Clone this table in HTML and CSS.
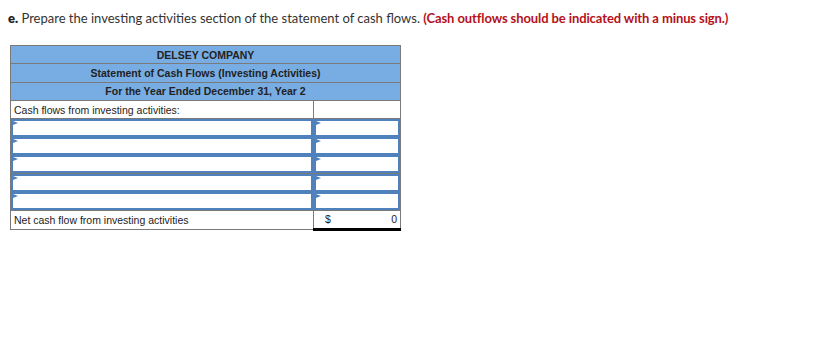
FILE: index.html
```html
<!DOCTYPE html>
<html>
<head>
<meta charset="utf-8">
<link rel="stylesheet" href="styles.css">
</head>
<body>
<p class="prompt"><b class="part">e.</b> Prepare the investing activities section of the statement of cash flows. <b class="note">(Cash outflows should be indicated with a minus sign.)</b></p>
<table class="sheet">
  <colgroup><col class="c1"><col class="c2"></colgroup>
  <tr class="head"><td colspan="2">DELSEY COMPANY</td></tr>
  <tr class="head"><td colspan="2">Statement of Cash Flows (Investing Activities)</td></tr>
  <tr class="head"><td colspan="2">For the Year Ended December 31, Year 2</td></tr>
  <tr class="plain"><td class="label">Cash flows from investing activities:</td><td class="amt"></td></tr>
  <tr class="entry"><td class="label"><div class="box"><span class="flag"></span></div></td><td class="amt"><div class="box"><span class="flag"></span></div></td></tr>
  <tr class="entry"><td class="label"><div class="box"><span class="flag"></span></div></td><td class="amt"><div class="box"><span class="flag"></span></div></td></tr>
  <tr class="entry"><td class="label"><div class="box"><span class="flag"></span></div></td><td class="amt"><div class="box"><span class="flag"></span></div></td></tr>
  <tr class="entry"><td class="label"><div class="box"><span class="flag"></span></div></td><td class="amt"><div class="box"><span class="flag"></span></div></td></tr>
  <tr class="entry"><td class="label"><div class="box"><span class="flag"></span></div></td><td class="amt"><div class="box"><span class="flag"></span></div></td></tr>
  <tr class="plain"><td class="label">Net cash flow from investing activities</td><td class="amt total"><div class="sum"><span class="dollar">$</span><span>0</span></div></td></tr>
</table>
</body>
</html>
```

FILE: styles.css
```css
body {
  margin: 0;
  padding: 0;
  background: #fff;
}
.prompt {
  margin: 0;
  padding: 9px 0 0 8px;
  font-family: Lato, "Open Sans", sans-serif;
  font-size: 13px;
  line-height: 18px;
  color: #333;
}
.part { color: #222; font-weight: 800; }
.note { color: #b5111a; font-weight: 700; letter-spacing: -0.1px; }
.sheet {
  margin: 18px 0 0 10px;
  border-collapse: collapse;
  table-layout: fixed;
  width: 390px;
  font-family: "Liberation Sans", Arial, sans-serif;
  font-size: 10.5px;
  color: #222;
}
.c1 { width: 303px; }
.c2 { width: 87px; }
.sheet td {
  border: 1px solid #7a7a7a;
  padding: 0;
  height: 17.3px;
}
.head td {
  background: #78ade3;
  text-align: center;
  font-weight: bold;
}
.plain .label { padding: 0 3px; }
.box {
  position: relative;
  height: 14px;
  border: 2px solid #4f81bd;
  margin: -1px 0;
}
.flag {
  position: absolute;
  left: 0;
  top: 0;
  width: 0;
  height: 0;
  border-top: 2px solid transparent;
  border-bottom: 2px solid transparent;
  border-left: 5px solid #4f81bd;
}
.sheet td.total {
  border-bottom: 3px solid #000;
  padding: 0 3px 0 11px;
}
.sum {
  display: flex;
  justify-content: space-between;
  align-items: center;
}
```
